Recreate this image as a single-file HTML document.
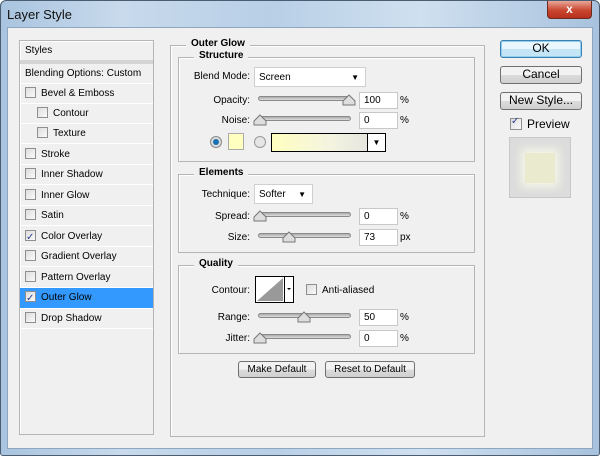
<!DOCTYPE html>
<html><head><meta charset="utf-8"><style>
*{box-sizing:border-box;margin:0;padding:0}
body{width:600px;height:456px;overflow:hidden;background:#fff;font-family:"Liberation Sans",sans-serif;font-size:10px;color:#000;position:relative}
.a{position:absolute}
.frame{left:0;top:0;width:600px;height:456px;background:linear-gradient(90deg,#a9c4df 0%,#c8daec 20%,#b8cfe6 45%,#cfe0f0 70%,#a8c2dd 100%);border:1px solid #4b5d70;border-radius:6px 6px 3px 3px}
.content{left:7px;top:27px;width:586px;height:422px;background:#f0f0f0;border:1px solid #8ea6bf}
.gb{border:1px solid #b5b5b5;box-shadow:1px 1px 0 #fff inset}
.leg{background:#f0f0f0;font-weight:bold;padding:0 5px;font-size:10px}
.row{left:20px;width:133px;height:20px;border-bottom:1px solid #fff;padding-left:5px;line-height:20px;font-size:10px}
.cb{display:inline-block;width:11px;height:11px;border:1px solid #8f8f8f;background:linear-gradient(135deg,#ddd,#fafafa);vertical-align:-2px;margin-right:5px;position:relative}
.ck:after{content:"✓";position:absolute;left:0;top:-3px;font-size:10px;color:#2a3f8f}
.track{height:5px;border:1px solid #8a8a8a;border-radius:3px;background:linear-gradient(#aaa,#ddd)}
.inp{width:39px;height:17px;background:#fff;border:1px solid #c8c8c8;padding-left:4px;line-height:15px;font-size:10px}
.lbl{text-align:right;font-size:10px}
.btn{border:1px solid #707070;border-radius:3px;background:linear-gradient(#f2f2f2 50%,#dcdcdc 50%,#cfcfcf);text-align:center;font-size:12px;line-height:15px}
.sel{background:#fff;border:1px solid #cfcfcf;font-size:10px;padding-left:4px;line-height:20px}
</style></head><body>
<div class="a frame"></div>
<div class="a" style="left:7px;top:7px;font-size:13px;color:#111">Layer Style</div>
<div class="a" style="left:547px;top:1px;width:45px;height:18px;border:1px solid #6b2a20;border-top:none;border-radius:0 0 4px 4px;background:linear-gradient(#e8a79b,#c9462f 55%,#b8301c);color:#fff;font-weight:bold;text-align:center;font-size:12px;line-height:16px">x</div>
<div class="a content"></div>

<div class="a gb" style="left:19px;top:40px;width:135px;height:395px"></div>
<div class="a" style="left:20px;top:41px;width:133px;height:19px;padding-left:5px;line-height:20px">Styles</div>
<div class="a" style="left:20px;top:60px;width:133px;height:4px;background:#d4d4d4"></div>
<div class="a row" style="top:64px;height:20px">Blending Options: Custom</div>
<div class="a row" style="top:84px"><span class="cb"></span>Bevel &amp; Emboss</div>
<div class="a row" style="top:104px;padding-left:17px"><span class="cb"></span>Contour</div>
<div class="a row" style="top:124px;padding-left:17px"><span class="cb"></span>Texture</div>
<div class="a row" style="top:145px"><span class="cb"></span>Stroke</div>
<div class="a row" style="top:165px"><span class="cb"></span>Inner Shadow</div>
<div class="a row" style="top:186px"><span class="cb"></span>Inner Glow</div>
<div class="a row" style="top:206px"><span class="cb"></span>Satin</div>
<div class="a row" style="top:227px"><span class="cb ck"></span>Color Overlay</div>
<div class="a row" style="top:247px"><span class="cb"></span>Gradient Overlay</div>
<div class="a row" style="top:268px"><span class="cb"></span>Pattern Overlay</div>
<div class="a row" style="top:288px;background:#3399ff;height:21px"><span class="cb ck"></span>Outer Glow</div>
<div class="a row" style="top:309px"><span class="cb"></span>Drop Shadow</div>

<div class="a gb" style="left:170px;top:45px;width:315px;height:392px"></div>
<div class="a leg" style="left:186px;top:38px">Outer Glow</div>
<div class="a gb" style="left:178px;top:57px;width:297px;height:105px"></div>
<div class="a leg" style="left:194px;top:50px">Structure</div>
<div class="a lbl" style="left:180px;top:71px;width:70px">Blend Mode:</div>
<div class="a sel" style="left:254px;top:67px;width:112px;height:20px">Screen<span style="position:absolute;right:6px;top:0;font-size:8px">▼</span></div>
<div class="a lbl" style="left:180px;top:95px;width:70px">Opacity:</div>
<div class="a track" style="left:258px;top:96px;width:93px"></div>
<svg class="a" style="left:342px;top:94px" width="14" height="12"><path d="M1 11 L1 7 L7 1 L13 7 L13 11 Z" fill="#ddd" stroke="#777"/></svg>
<div class="a inp" style="left:359px;top:92px">100</div><div class="a" style="left:400px;top:95px">%</div>
<div class="a lbl" style="left:180px;top:115px;width:70px">Noise:</div>
<div class="a track" style="left:258px;top:116px;width:93px"></div>
<svg class="a" style="left:253px;top:114px" width="14" height="12"><path d="M1 11 L1 7 L7 1 L13 7 L13 11 Z" fill="#ddd" stroke="#777"/></svg>
<div class="a inp" style="left:359px;top:112px">0</div><div class="a" style="left:400px;top:115px">%</div>
<svg class="a" style="left:210px;top:136px" width="12" height="12"><circle cx="6" cy="6" r="5.5" fill="#ddd" stroke="#888"/><circle cx="6" cy="6" r="3" fill="#1a6fb0"/></svg>
<div class="a" style="left:228px;top:133px;width:16px;height:17px;background:#ffffc0;border:1px solid #aaa"></div>
<svg class="a" style="left:254px;top:136px" width="12" height="12"><circle cx="6" cy="6" r="5.5" fill="#e6e6e6" stroke="#999"/></svg>
<div class="a" style="left:271px;top:133px;width:115px;height:19px;border:1px solid #000;background:linear-gradient(90deg,#ffffc0,#f4f4e0 50%,#e0e0e0)"></div>
<div class="a" style="left:367px;top:134px;width:18px;height:17px;background:#fff;border-left:1px solid #000;text-align:center;font-size:8px;line-height:17px">▼</div>

<div class="a gb" style="left:178px;top:174px;width:297px;height:79px"></div>
<div class="a leg" style="left:194px;top:167px">Elements</div>
<div class="a lbl" style="left:180px;top:189px;width:70px">Technique:</div>
<div class="a sel" style="left:254px;top:184px;width:59px;height:20px">Softer<span style="position:absolute;right:6px;top:0;font-size:8px">▼</span></div>
<div class="a lbl" style="left:180px;top:211px;width:70px">Spread:</div>
<div class="a track" style="left:258px;top:212px;width:93px"></div>
<svg class="a" style="left:253px;top:210px" width="14" height="12"><path d="M1 11 L1 7 L7 1 L13 7 L13 11 Z" fill="#ddd" stroke="#777"/></svg>
<div class="a inp" style="left:359px;top:208px">0</div><div class="a" style="left:400px;top:211px">%</div>
<div class="a lbl" style="left:180px;top:232px;width:70px">Size:</div>
<div class="a track" style="left:258px;top:233px;width:93px"></div>
<svg class="a" style="left:282px;top:231px" width="14" height="12"><path d="M1 11 L1 7 L7 1 L13 7 L13 11 Z" fill="#ddd" stroke="#777"/></svg>
<div class="a inp" style="left:359px;top:229px">73</div><div class="a" style="left:400px;top:232px">px</div>

<div class="a gb" style="left:178px;top:265px;width:297px;height:89px"></div>
<div class="a leg" style="left:194px;top:258px">Quality</div>
<div class="a lbl" style="left:180px;top:285px;width:70px">Contour:</div>
<svg class="a" style="left:255px;top:276px" width="39" height="27"><rect x="0.5" y="0.5" width="38" height="26" fill="#fff" stroke="#000"/><path d="M2 25 L28 2 L28 25 Z" fill="#999"/><line x1="29.5" y1="1" x2="29.5" y2="26" stroke="#000"/><path d="M32 12 L36 12 L34 14 Z" fill="#000"/></svg>
<div class="a" style="left:306px;top:284px"><span class="cb"></span>Anti-aliased</div>
<div class="a lbl" style="left:180px;top:312px;width:70px">Range:</div>
<div class="a track" style="left:258px;top:313px;width:93px"></div>
<svg class="a" style="left:297px;top:311px" width="14" height="12"><path d="M1 11 L1 7 L7 1 L13 7 L13 11 Z" fill="#ddd" stroke="#777"/></svg>
<div class="a inp" style="left:359px;top:309px">50</div><div class="a" style="left:400px;top:312px">%</div>
<div class="a lbl" style="left:180px;top:333px;width:70px">Jitter:</div>
<div class="a track" style="left:258px;top:334px;width:93px"></div>
<svg class="a" style="left:253px;top:332px" width="14" height="12"><path d="M1 11 L1 7 L7 1 L13 7 L13 11 Z" fill="#ddd" stroke="#777"/></svg>
<div class="a inp" style="left:359px;top:330px">0</div><div class="a" style="left:400px;top:333px">%</div>

<div class="a btn" style="left:238px;top:361px;width:78px;height:17px;font-size:10px">Make Default</div>
<div class="a btn" style="left:325px;top:361px;width:90px;height:17px;font-size:10px">Reset to Default</div>

<div class="a btn" style="left:500px;top:40px;width:82px;height:18px;border-color:#3c7fb1;box-shadow:0 0 0 1px #8fd0f0 inset;background:linear-gradient(#e9f6fd 50%,#c4e5f6 50%)">OK</div>
<div class="a btn" style="left:500px;top:66px;width:82px;height:18px">Cancel</div>
<div class="a btn" style="left:500px;top:92px;width:82px;height:18px">New Style...</div>
<div class="a" style="left:510px;top:117px;font-size:12px"><span class="cb ck" style="width:12px;height:12px"></span>Preview</div>
<div class="a" style="left:509px;top:137px;width:62px;height:61px;background:#dcdcdc;border:1px solid #c8c8c8"></div>
<div class="a" style="left:525px;top:153px;width:30px;height:30px;background:#eaeacf;box-shadow:0 0 8px 4px #f6f6e8"></div>
</body></html>
